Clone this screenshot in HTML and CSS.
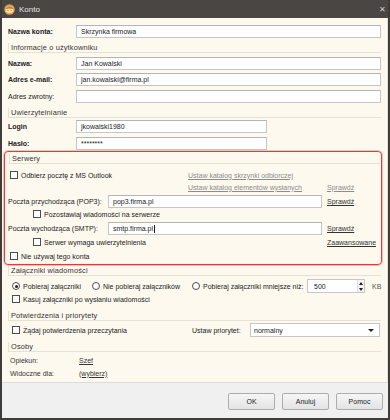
FILE: index.html
```html
<!DOCTYPE html>
<html lang="pl">
<head>
<meta charset="utf-8">
<link rel="stylesheet" href="styles.css">
</head>
<body>
<div class="window">
  <div class="titlebar">
    <svg class="appicon" width="11" height="11" viewBox="0 0 11 11">
      <circle cx="5.5" cy="5.5" r="5.2" fill="#e7a24a"/>
      <path d="M1.6 5.6 Q5.5 1.6 9.4 5.6 L9.2 7.6 Q5.5 10.6 1.8 7.6 Z" fill="#fbe1b5"/>
      <path d="M1.4 5.2 Q5.5 0.8 9.6 5.2 Q5.5 3.6 1.4 5.2 Z" fill="#b8722c"/>
      <circle cx="4" cy="6.3" r="0.5" fill="#6b4a2a"/>
      <circle cx="7" cy="6.3" r="0.5" fill="#6b4a2a"/>
    </svg>
    <span class="title">Konto</span>
    <span class="close">✕</span>
  </div>
  <div class="content">
    <div class="row r-top">
      <span class="lbl bold">Nazwa konta:</span>
      <div class="input grow">Skrzynka firmowa</div>
    </div>
    <div class="hdr hdr1">Informacje o użytkowniku</div>
    <div class="row r-m4">
      <span class="lbl bold">Nazwa:</span>
      <div class="input grow">Jan Kowalski</div>
    </div>
    <div class="row r-m3">
      <span class="lbl bold">Adres e-mail:</span>
      <div class="input grow">jan.kowalski@firma.pl</div>
    </div>
    <div class="row r-m4">
      <span class="lbl">Adres zwrotny:</span>
      <div class="input grow"></div>
    </div>
    <div class="hdr hdr2">Uwierzytelnianie</div>
    <div class="row r-m2">
      <span class="lbl bold">Login</span>
      <div class="input short">jkowalski1980</div>
    </div>
    <div class="row r-m4">
      <span class="lbl bold">Hasło:</span>
      <div class="input short">********</div>
    </div>

    <div class="box">
      <div class="hdr hdr-box">Serwery</div>
      <div class="brow b-first">
        <span class="bleft"><span class="cb"></span>Odbierz pocztę z MS Outlook</span>
        <span class="link gray">Ustaw katalog skrzynki odbiorczej</span>
      </div>
      <div class="brow">
        <span class="bleft"></span>
        <span class="link gray bmid">Ustaw katalog elementów wysłanych</span>
        <span class="link gray">Sprawdź</span>
      </div>
      <div class="brow b-in">
        <span class="blbl">Poczta przychodząca (POP3):</span>
        <div class="input srv">pop3.firma.pl</div>
        <span class="link dark">Sprawdź</span>
      </div>
      <div class="brow indent">
        <span class="cb"></span>Pozostawiaj wiadomości na serwerze
      </div>
      <div class="brow b-in">
        <span class="blbl">Poczta wychodząca (SMTP):</span>
        <div class="input srv">smtp.firma.pl<span class="caret"></span></div>
        <span class="link dark">Sprawdź</span>
      </div>
      <div class="brow b-m1">
        <span class="bwide indent2"><span class="cb"></span>Serwer wymaga uwierzytelnienia</span>
        <span class="link dark">Zaawansowane</span>
      </div>
      <div class="brow b-m2">
        <span class="cb"></span>Nie używaj tego konta
      </div>
    </div>

    <div class="hdr hdr3">Załączniki wiadomości</div>
    <div class="row2 radios">
      <span class="rg rg1"><span class="rb on"></span>Pobieraj załączniki</span>
      <span class="rg rg2"><span class="rb"></span>Nie pobieraj załączników</span>
      <span class="rg rg3"><span class="rb"></span>Pobieraj załączniki mniejsze niż:</span>
      <div class="spin">
        <span class="spinval">500</span>
        <span class="spinbtn"><span class="up"></span><span class="dn"></span></span>
      </div>
      <span class="kb">KB</span>
    </div>
    <div class="row2 chk">
      <span class="cb"></span>Kasuj załączniki po wysłaniu wiadomości
    </div>
    <div class="hdr hdr4">Potwierdzenia i priorytety</div>
    <div class="row2 prio">
      <span class="prleft"><span class="cb"></span>Żądaj potwierdzenia przeczytania</span>
      <span class="prlbl">Ustaw priorytet:</span>
      <div class="select">normalny<span class="arrow"></span></div>
    </div>
    <div class="hdr hdr5">Osoby</div>
    <div class="row2 person p1">
      <span class="lbl">Opiekun:</span><span class="link dark">Szef</span>
    </div>
    <div class="row2 person p2">
      <span class="lbl">Widoczne dla:</span><span class="link dark">(wybierz)</span>
    </div>
  </div>
  <div class="footer">
    <button class="btn b-ok">OK</button>
    <button class="btn b-cancel">Anuluj</button>
    <button class="btn b-help">Pomoc</button>
  </div>
</div>
</body>
</html>
```

FILE: styles.css
```css
* { box-sizing: border-box; }
html, body { margin: 0; padding: 0; }
body {
  width: 390px;
  height: 420px;
  overflow: hidden;
  font-family: "Liberation Sans", Arial, sans-serif;
  font-size: 7px;
  color: #222;
  background: #fff;
}
.window {
  width: 390px;
  height: 420px;
  display: flex;
  flex-direction: column;
  background: #4a4643;
  border-left: 2px solid #3f3c3a;
  border-right: 2px solid #3f3c3a;
  border-bottom: 2px solid #3f3c3a;
}
.titlebar {
  height: 18px;
  flex: none;
  display: flex;
  align-items: center;
  padding-left: 2px;
  color: #e6e4e2;
}
.appicon { flex: none; }
.title { margin-left: 4px; font-size: 8px; }
.close { margin-left: auto; margin-right: 2px; font-size: 8px; color: #cfcdcb; }

.content {
  flex: 1;
  background: #fdf9ef;
  display: flex;
  flex-direction: column;
  border-right: 1px solid #e4e0d6;
}
.row {
  display: flex;
  align-items: center;
  height: 13px;
  padding: 0 6px 0 6px;
}
.r-top { margin-top: 7px; }
.r-m4 { margin-top: 4px; }
.r-m3 { margin-top: 3px; }
.r-m2 { margin-top: 2px; }
.lbl { width: 68px; flex: none; white-space: nowrap; }
.bold { font-weight: bold; }
.input {
  height: 13px;
  background: #fff;
  border: 1px solid #c6c6c6;
  border-top-color: #b4b4b4;
  padding-left: 4px;
  line-height: 11px;
  white-space: nowrap;
  display: flex;
  align-items: center;
}
.grow { flex: 1; }
.short { width: 191px; }

.hdr {
  height: 10px;
  line-height: 9px;
  font-size: 7.4px;
  letter-spacing: 0.15px;
  color: #333;
  margin-left: 6px;
  margin-right: 6px;
  padding-left: 2px;
  border-left: 1px solid #e6e1d4;
  border-bottom: 1px solid #e6e1d4;
}
.hdr1 { margin-top: 5px; }
.hdr2 { margin-top: 5px; }
.hdr3 { margin-top: 1px; }
.hdr4 { margin-top: 6px; }
.hdr5 { margin-top: 5px; }

.box {
  margin: 1px 5px 0 2px;
  height: 114px;
  border: 1px solid #e53a3a;
  border-radius: 4px;
  box-shadow: 0 0 0 1px rgba(235, 90, 90, 0.35);
  padding: 2px 0 0 3px;
}
.hdr-box { margin-left: 1px; margin-right: 1px; margin-top: 0; }
.brow {
  display: flex;
  align-items: center;
  height: 12px;
  white-space: nowrap;
}
.b-first { margin-top: 5px; }
.b-in { height: 13px; margin-top: 2px; }
.b-m1 { margin-top: 1px; }
.b-m2 { margin-top: 2px; }
.bleft { width: 180px; flex: none; display: flex; align-items: center; }
.bmid { width: 139px; flex: none; }
.bwide { width: 319px; flex: none; display: flex; align-items: center; }
.blbl { width: 100px; flex: none; }
.srv { width: 214px; flex: none; margin-right: 5px; }
.indent { padding-left: 23px; }
.indent2 { padding-left: 23px; }
.caret { display: inline-block; width: 1px; height: 8px; background: #222; margin-left: 1px; }

.link { text-decoration: underline; white-space: nowrap; }
.gray { color: #8c8c8c; }
.dark { color: #333; }

.cb {
  display: inline-block;
  flex: none;
  width: 8px;
  height: 8px;
  border: 1px solid #4d4d4d;
  background: #fff;
  margin-left: 2px;
  margin-right: 3px;
}
.rb {
  display: inline-block;
  flex: none;
  width: 8px;
  height: 8px;
  border: 1px solid #4d4d4d;
  border-radius: 50%;
  background: #fff;
  margin-left: 2px;
  margin-right: 3px;
  position: relative;
}
.rb.on::after {
  content: "";
  position: absolute;
  left: 1.5px;
  top: 1.5px;
  width: 3px;
  height: 3px;
  border-radius: 50%;
  background: #222;
}

.row2 {
  display: flex;
  align-items: center;
  padding-left: 8px;
  padding-right: 7px;
  white-space: nowrap;
}
.radios { height: 14px; margin-top: 3px; }
.rg { display: flex; align-items: center; flex: none; }
.rg1 { width: 80px; }
.rg2 { width: 100px; }
.rg3 { width: 117px; }
.spin {
  width: 58px;
  height: 14px;
  background: #fff;
  border: 1px solid #c6c6c6;
  display: flex;
  align-items: center;
  padding-left: 6px;
  flex: none;
}
.spinval { flex: 1; }
.spinbtn {
  width: 7px;
  height: 12px;
  display: flex;
  flex-direction: column;
  justify-content: space-around;
  align-items: center;
  background: #f4f4f4;
  border-left: 1px solid #ddd;
}
.up { width: 0; height: 0; border-left: 2.5px solid transparent; border-right: 2.5px solid transparent; border-bottom: 3px solid #222; }
.dn { width: 0; height: 0; border-left: 2.5px solid transparent; border-right: 2.5px solid transparent; border-top: 3px solid #222; }
.kb { margin-left: 7px; color: #555; }
.chk { height: 12px; }
.prio { height: 14px; margin-top: 2px; }
.prleft { width: 182px; flex: none; display: flex; align-items: center; }
.prlbl { width: 58px; flex: none; }
.select {
  flex: 1;
  height: 14px;
  background: #fff;
  border: 1px solid #c6c6c6;
  display: flex;
  align-items: center;
  padding-left: 3px;
  padding-right: 5px;
}
.arrow {
  margin-left: auto;
  width: 0; height: 0;
  border-left: 3px solid transparent;
  border-right: 3px solid transparent;
  border-top: 3.5px solid #222;
}
.person { height: 12px; }
.p1 { margin-top: 2px; }
.p2 { margin-top: 1px; }
.person .lbl { width: 69px; color: #333; }

.footer {
  height: 36px;
  flex: none;
  background: #f0f0f0;
  border-top: 1px solid #dcdcdc;
  display: flex;
  justify-content: flex-end;
  align-items: flex-start;
  padding: 10px 5px 0 0;
  gap: 7px;
}
.btn {
  width: 47px;
  height: 17px;
  font-family: "Liberation Sans", Arial, sans-serif;
  font-size: 7px;
  color: #222;
  background: linear-gradient(#f6f6f6, #e3e3e3);
  border: 1px solid #adadad;
  border-radius: 2px;
  padding: 0;
}
```
